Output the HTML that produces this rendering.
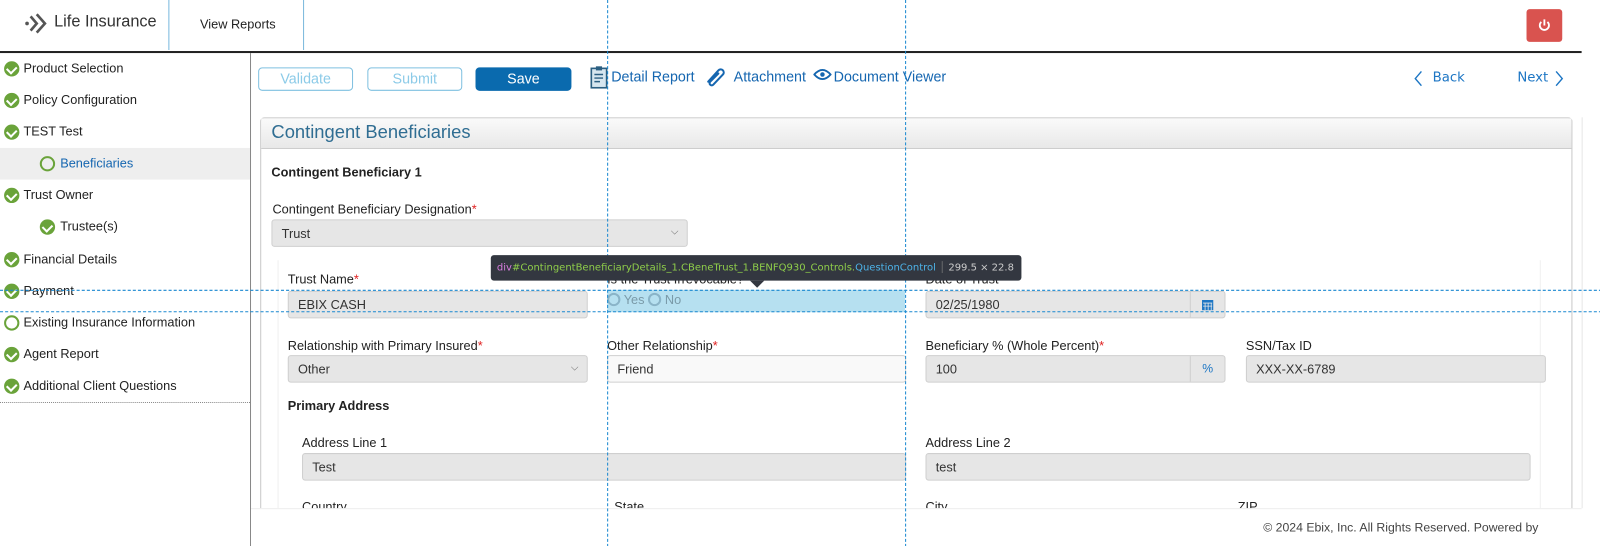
<!DOCTYPE html>
<html><head><meta charset="utf-8"><style>
*{box-sizing:border-box;margin:0;padding:0}
html,body{width:1600px;height:546px;overflow:hidden;background:#fff}
body{font-family:"Liberation Sans",Arial,sans-serif;font-size:13px;color:#222;position:relative}
#w{position:absolute;left:0;top:0;width:1568px;height:535px;transform:scale(1.0204);transform-origin:0 0}
.a{position:absolute}
.lbl{position:absolute;font-size:12.5px;color:#222;white-space:nowrap}
.req{color:#e02020}
.inp{position:absolute;height:27px;background:#e6e6e6;border:1px solid #cfcfcf;border-radius:3px;font-size:12.5px;padding:6px 9px;color:#333}
.side{position:absolute;left:0;width:245px;height:31px;font-size:12.5px;color:#222;line-height:31px}
.chk{position:absolute;left:4px;top:8px;width:15px;height:15px;border-radius:50%;background:#6aa33a}
.chk:after{content:"";position:absolute;left:4px;top:3px;width:5px;height:7px;border:solid #fff;border-width:0 2px 2px 0;transform:rotate(45deg)}
.btn{position:absolute;top:66px;height:23px;border:1px solid #7fc0e0;border-radius:4px;color:#8ccbe8;font-size:14px;text-align:center;line-height:21px}
.lnk{position:absolute;top:67px;color:#1566b0;font-size:14px}
.vd{position:absolute;top:0;height:546px;border-left:1px dashed #1a88d0}
.hd{position:absolute;left:0;width:1600px;border-top:1px dashed #1a88d0}
.caret{position:absolute;right:8px;top:6px;font-size:10px;color:#666}
</style></head><body><div id="w">
<!-- header -->
<svg class="a" style="left:24px;top:12px" width="24" height="22" viewBox="0 0 24 22"><circle cx="2.5" cy="11" r="1.8" fill="#555"/><path d="M6 4 L12 11 L6 18" stroke="#555" stroke-width="2.6" fill="none"/><path d="M12 2 L20 11 L12 20" stroke="#555" stroke-width="2.6" fill="none"/></svg>
<div class="a" style="left:53px;top:13px;font-size:16px;color:#333">Life Insurance</div>
<div class="a" style="left:165px;top:0;height:49px;border-left:1px solid #7ab8dd"></div>
<div class="a" style="left:297px;top:0;height:49px;border-left:1px solid #7ab8dd"></div>
<div class="a" style="left:196px;top:17px;font-size:12.5px;color:#222">View Reports</div>
<div class="a" style="left:1496px;top:9px;width:35px;height:32px;background:#d9534f;border-radius:3px"><svg width="35" height="32" viewBox="0 0 35 32"><path d="M14.5 12.5 A4.5 4.5 0 1 0 20.5 12.5" stroke="#fff" stroke-width="1.8" fill="none"/><path d="M17.5 10 V16" stroke="#fff" stroke-width="1.8"/></svg></div>
<div class="a" style="left:0;top:50px;width:1550px;border-top:2px solid #222"></div>
<!-- sidebar -->
<div class="a" style="left:245px;top:52px;height:494px;border-left:1px solid #888"></div>
<div class="side" style="top:52px"><span class="chk"></span><span style="margin-left:23px">Product Selection</span></div>
<div class="side" style="top:83px"><span class="chk"></span><span style="margin-left:23px">Policy Configuration</span></div>
<div class="side" style="top:114px"><span class="chk"></span><span style="margin-left:23px">TEST Test</span></div>
<div class="side" style="top:145px;background:#eeeeee"><span class="a" style="left:39px;top:8px;width:15px;height:15px;border:2px solid #6aa33a;border-radius:50%"></span><span style="margin-left:59px;color:#1566b0">Beneficiaries</span></div>
<div class="side" style="top:176px"><span class="chk"></span><span style="margin-left:23px">Trust Owner</span></div>
<div class="side" style="top:207px"><span class="chk" style="left:39px"></span><span style="margin-left:59px">Trustee(s)</span></div>
<div class="side" style="top:239px"><span class="chk"></span><span style="margin-left:23px">Financial Details</span></div>
<div class="side" style="top:270px"><span class="chk"></span><span style="margin-left:23px">Payment</span></div>
<div class="side" style="top:301px"><span class="a" style="left:4px;top:8px;width:15px;height:15px;border:2px solid #6aa33a;border-radius:50%"></span><span style="margin-left:23px">Existing Insurance Information</span></div>
<div class="side" style="top:332px"><span class="chk"></span><span style="margin-left:23px">Agent Report</span></div>
<div class="side" style="top:363px"><span class="chk"></span><span style="margin-left:23px">Additional Client Questions</span></div>
<div class="a" style="left:0;top:394px;width:245px;border-top:1px dotted #888"></div>
<!-- toolbar -->
<div class="btn" style="left:253px;width:93px">Validate</div>
<div class="btn" style="left:360px;width:93px">Submit</div>
<div class="btn" style="left:466px;width:94px;background:#0a6aae;border-color:#0a6aae;color:#fff">Save</div>
<svg class="a" style="left:578px;top:64px" width="18" height="24" viewBox="0 0 18 24"><rect x="1.5" y="3" width="15" height="19" fill="#d6e6ef" stroke="#2b5f82" stroke-width="1.6"/><rect x="6" y="1" width="6" height="4" fill="#2b5f82"/><path d="M4.5 9H13M4.5 12.5H13M4.5 16H10" stroke="#2b5f82" stroke-width="1.4"/></svg>
<div class="lnk" style="left:599px">Detail Report</div>
<svg class="a" style="left:690px;top:65px" width="22" height="20" viewBox="0 0 22 20"><path d="M4 15 L14 4 A3 3 0 0 1 18.5 8 L9 18 A2 2 0 0 1 6 15 L14 7" stroke="#1566b0" stroke-width="2" fill="none" stroke-linecap="round"/></svg>
<div class="lnk" style="left:719px">Attachment</div>
<svg class="a" style="left:797px;top:67px" width="18" height="12" viewBox="0 0 18 12"><path d="M1 6 Q9 -3 17 6 Q9 15 1 6Z" stroke="#1566b0" stroke-width="1.8" fill="none"/><circle cx="9" cy="6" r="2.2" fill="#1566b0"/></svg>
<div class="lnk" style="left:817px">Document Viewer</div>
<svg class="a" style="left:1385px;top:69px" width="10" height="16" viewBox="0 0 10 16"><path d="M8 1 L2 8 L8 15" stroke="#1d76c4" stroke-width="1.4" fill="none"/></svg>
<div class="lnk" style="left:1404px;top:69px;font-family:'DejaVu Sans',sans-serif;font-size:13px;color:#1d76c4">Back</div>
<div class="lnk" style="left:1487px;top:69px;font-family:'DejaVu Sans',sans-serif;font-size:13px;color:#1d76c4">Next</div>
<svg class="a" style="left:1523px;top:69px" width="10" height="16" viewBox="0 0 10 16"><path d="M2 1 L8 8 L2 15" stroke="#1d76c4" stroke-width="1.4" fill="none"/></svg>
<!-- panel -->
<div class="a" style="left:255px;top:115px;width:1286px;height:400px;border:1px solid #c8c8c8;border-radius:4px 4px 0 0"></div>
<div class="a" style="left:256px;top:116px;width:1284px;height:30px;background:linear-gradient(#fafafa,#e8e8e8);border-bottom:1px solid #ccc"></div>
<div class="a" style="left:266px;top:119px;font-size:18px;color:#2f6d92">Contingent Beneficiaries</div>
<div class="a" style="left:1550px;top:115px;height:383px;border-left:1px solid #e6e6e6"></div>
<div class="lbl" style="left:266px;top:162px;font-weight:bold">Contingent Beneficiary 1</div>
<div class="lbl" style="left:267px;top:198px">Contingent Beneficiary Designation<span class="req">*</span></div>
<div class="inp" style="left:266px;top:215px;width:408px">Trust<span class="caret">⌵</span></div>
<div class="a" style="left:272px;top:255px;width:1238px;height:243px;border-left:1px solid #f0f0f0;border-right:1px solid #f0f0f0"></div>
<div class="lbl" style="left:282px;top:267px">Trust Name<span class="req">*</span></div>
<div class="inp" style="left:282px;top:285px;width:294px">EBIX CASH</div>
<div class="lbl" style="left:595px;top:267px">Is the Trust Irrevocable?</div>
<div class="a" style="left:595px;top:284px;width:292px;height:22px;background:#b6e0f0"></div>
<div class="a" style="left:595px;top:287px;font-size:12.5px;color:#7a9aa8"><span style="display:inline-block;width:13px;height:13px;border:2px solid #8ab4c8;border-radius:50%;vertical-align:-2px"></span> Yes <span style="display:inline-block;width:13px;height:13px;border:2px solid #8ab4c8;border-radius:50%;vertical-align:-2px"></span> No</div>
<div class="lbl" style="left:907px;top:267px">Date of Trust</div>
<div class="inp" style="left:907px;top:285px;width:294px">02/25/1980</div>
<div class="a" style="left:1166px;top:286px;width:34px;height:25px;border-left:1px solid #cfcfcf"><svg width="34" height="25" viewBox="0 0 34 25"><rect x="11" y="8" width="11" height="10" fill="#1d76c4"/><path d="M12 11h9M14 11v7M17 11v7M20 11v7M12 14h9" stroke="#e6e6e6" stroke-width=".8"/></svg></div>
<div class="lbl" style="left:282px;top:332px">Relationship with Primary Insured<span class="req">*</span></div>
<div class="inp" style="left:282px;top:348px;width:294px">Other<span class="caret">⌵</span></div>
<div class="lbl" style="left:595px;top:332px">Other Relationship<span class="req">*</span></div>
<div class="inp" style="left:595px;top:348px;width:293px;background:#f9f9f9">Friend</div>
<div class="lbl" style="left:907px;top:332px">Beneficiary % (Whole Percent)<span class="req">*</span></div>
<div class="inp" style="left:907px;top:348px;width:294px">100</div>
<div class="a" style="left:1166px;top:349px;width:34px;height:25px;border-left:1px solid #cfcfcf;color:#1d76c4;text-align:center;line-height:25px;font-size:12px">%</div>
<div class="lbl" style="left:1221px;top:332px">SSN/Tax ID</div>
<div class="inp" style="left:1221px;top:348px;width:294px">XXX-XX-6789</div>
<div class="lbl" style="left:282px;top:391px;font-weight:bold">Primary Address</div>
<div class="lbl" style="left:296px;top:427px">Address Line 1</div>
<div class="inp" style="left:296px;top:444px;width:592px">Test</div>
<div class="lbl" style="left:907px;top:427px">Address Line 2</div>
<div class="inp" style="left:907px;top:444px;width:593px">test</div>
<div class="lbl" style="left:296px;top:490px">Country</div>
<div class="lbl" style="left:602px;top:490px">State</div>
<div class="lbl" style="left:907px;top:490px">City</div>
<div class="lbl" style="left:1213px;top:490px">ZIP</div>
<!-- footer -->
<div class="a" style="left:246px;top:498px;width:1304px;height:48px;background:#fff;border-top:1px solid #eee"></div>
<div class="a" style="left:1238px;top:510px;font-size:12px;color:#444">© 2024 Ebix, Inc. All Rights Reserved. Powered by</div>
<!-- devtools overlay -->
<div class="vd" style="left:595px"></div>
<div class="vd" style="left:887px"></div>
<div class="hd" style="top:284px"></div>
<div class="hd" style="top:305px"></div>
<div class="a" style="left:481px;top:250px;width:520px;height:25px;background:#333740;border-radius:3px;font-family:'DejaVu Sans',sans-serif;font-size:9.8px;line-height:25px;padding-left:6px;white-space:nowrap;overflow:hidden"><span style="color:#d97ee0">div</span><span style="color:#8fce4a">#ContingentBeneficiaryDetails_1.CBeneTrust_1.BENFQ930_Controls.</span><span style="color:#4db3e8">QuestionControl</span><span style="color:#777"> │ </span><span style="color:#ccc">299.5 × 22.8</span></div>
<div class="a" style="left:735px;top:275px;width:0;height:0;border-left:7px solid transparent;border-right:7px solid transparent;border-top:7px solid #333740"></div>
</div></body></html>
